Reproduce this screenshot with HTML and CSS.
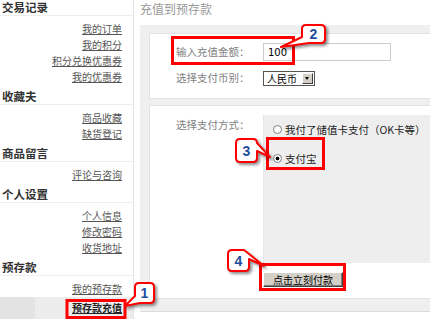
FILE: index.html
```html
<!DOCTYPE html>
<html lang="zh-CN">
<head>
    <meta charset="UTF-8">
    <title>充值到预存款</title>
    <link rel="stylesheet" href="styles.css">
</head>
<body>

<div class="page">
    <!-- Left Menu -->
    <div class="sidebar">
        <div class="group">
            <h3>交易记录</h3>
            <ul>
                <li><a href="#">我的订单</a></li>
                <li><a href="#">我的积分</a></li>
                <li><a href="#">积分兑换优惠券</a></li>
                <li><a href="#">我的优惠券</a></li>
            </ul>
        </div>
        <div class="group">
            <h3>收藏夫</h3>
            <ul>
                <li><a href="#">商品收藏</a></li>
                <li><a href="#">缺货登记</a></li>
            </ul>
        </div>
        <div class="group">
            <h3>商品留言</h3>
            <ul>
                <li><a href="#">评论与咨询</a></li>
            </ul>
        </div>
        <div class="group">
            <h3>个人设置</h3>
            <ul>
                <li><a href="#">个人信息</a></li>
                <li><a href="#">修改密码</a></li>
                <li><a href="#">收货地址</a></li>
            </ul>
        </div>
        <div class="group">
            <h3>预存款</h3>
            <ul>
                <li><a href="#">我的预存款</a></li>
                <li class="active"><a href="#">预存款充值</a></li>
            </ul>
        </div>
    </div>

    <!-- Recharge Form -->
    <div class="main">
        <div class="title">充值到预存款</div>
        <div class="frame">
            <div class="panel panel-amount">
                <div class="row">
                    <label class="field-label">输入充值金额：</label>
                    <input class="amount" type="text" value="100">
                </div>
                <div class="row">
                    <label class="field-label">选择支付币别：</label>
                    <div class="select">
                        <span class="select-text">人民币</span>
                        <span class="select-btn"></span>
                    </div>
                </div>
            </div>
            <div class="panel panel-pay">
                <div class="pay-row">
                    <label class="field-label pay-label">选择支付方式：</label>
                    <div class="methods">
                        <label class="method"><input type="radio" name="pay">我付了储值卡支付（OK卡等）</label>
                        <label class="method"><input type="radio" name="pay" checked>支付宝</label>
                    </div>
                </div>
                <button class="pay-btn">点击立刻付款</button>
            </div>
        </div>
    </div>

    <!-- Step annotations -->
    <svg class="notes" width="430" height="319" viewBox="0 0 430 319">
        <g class="marks">
            <rect x="67" y="300.5" width="58" height="17"/>
            <rect x="172.5" y="37.5" width="121" height="26"/>
            <rect x="267.5" y="138.5" width="56" height="30"/>
            <rect x="260.5" y="264.5" width="84" height="25"/>
        </g>
        <g class="bubbles">
            <path d="M139,283 H150 Q154,283 154,287 V299 Q154,303 150,303 H140 L125,306 L135,296 V287 Q135,283 139,283 Z"/>
            <path d="M306,25 H321 Q325,25 325,29 V39 Q325,43 321,43 H309 L281,47 L302,37 V29 Q302,25 306,25 Z"/>
            <path d="M240,139 H253 Q257,139 257,143 L270,157 L257,151 V158 Q257,162 253,162 H240 Q236,162 236,158 V143 Q236,139 240,139 Z"/>
            <path d="M232,250 H244 L264,266 L249,259 V267 Q249,271 245,271 H232 Q228,271 228,267 V254 Q228,250 232,250 Z"/>
        </g>
        <g class="nums">
            <text x="144.5" y="298">1</text>
            <text x="313.5" y="39">2</text>
            <text x="246.5" y="156">3</text>
            <text x="238.5" y="266">4</text>
        </g>
    </svg>
</div>

</body>
</html>
```

FILE: styles.css
```css
/* Reset */
* {
    margin: 0;
    padding: 0;
    box-sizing: border-box;
}

body {
    font-family: "Noto Sans CJK SC", "Liberation Sans", sans-serif;
    background: #fff;
    color: #333;
}

.page {
    position: relative;
    display: flex;
    width: 430px;
    height: 319px;
    overflow: hidden;
}

/* Sidebar */
.sidebar {
    width: 134px;
    flex-shrink: 0;
    border-right: 1px solid #e2e2e2;
}

.group h3 {
    font-size: 11.5px;
    line-height: 15px;
    font-weight: bold;
    color: #333;
    padding-left: 2px;
    border-bottom: 1px solid #eee;
}

.group ul {
    list-style: none;
    text-align: right;
    padding: 5px 11px 4px 0;
}

.group li {
    font-size: 10px;
    line-height: 16px;
}

.group a {
    color: #555;
    text-decoration: underline;
}

.group li.active {
    margin-right: -11px;
    padding: 3px 11px 8px 0;
    background: linear-gradient(to right, #e3e3e3 35px, #ececec 35px);
}

.group li.active a {
    color: #222;
    font-weight: bold;
}

/* Main area */
.main {
    flex: 1;
    margin-left: 6px;
    overflow: hidden;
}

.title {
    height: 25px;
    font-size: 12px;
    line-height: 17px;
    color: #999;
}

.frame {
    width: 330px;
    background: #efefef;
    padding: 8px 0 12px 9px;
    border-bottom: 1px solid #dcdcdc;
}

.panel {
    background: #fff;
    border: 1px solid #e2e2e2;
    padding-left: 26px;
}

.panel-amount {
    padding-top: 9px;
    padding-bottom: 11px;
    margin-bottom: 6px;
}

.row {
    display: flex;
    align-items: center;
    height: 18px;
}

.row + .row {
    margin-top: 8px;
}

.field-label {
    width: 87px;
    font-size: 10.5px;
    line-height: 14px;
    color: #808080;
    white-space: nowrap;
}

.amount {
    width: 128px;
    height: 18px;
    border: 1px solid #ccc;
    padding-left: 4px;
    font-family: "DejaVu Sans", sans-serif;
    font-size: 10px;
    color: #000;
    outline: none;
}

.select {
    display: flex;
    align-items: center;
    width: 52px;
    height: 15px;
    border: 1px solid #555;
    background: #fff;
}

.select-text {
    flex: 1;
    font-size: 10px;
    line-height: 13px;
    color: #000;
    padding-left: 3px;
}

.select-btn {
    position: relative;
    width: 11px;
    height: 11px;
    margin-right: 1px;
    background: #d4d0c8;
    border: 1px solid;
    border-color: #fff #404040 #404040 #fff;
}

.select-btn::after {
    content: "";
    position: absolute;
    left: 2px;
    top: 3px;
    border-left: 2.5px solid transparent;
    border-right: 2.5px solid transparent;
    border-top: 3px solid #000;
}

/* Payment methods */
.panel-pay {
    padding-top: 9px;
    padding-bottom: 11px;
}

.pay-row {
    display: flex;
    align-items: flex-start;
}

.pay-label {
    padding-top: 3px;
}

.methods {
    width: 200px;
    height: 148px;
    background: #eee;
    border-left: 1px solid #e6e6e6;
    padding: 7px 0 0 9px;
}

.method {
    display: flex;
    align-items: center;
    height: 14px;
    font-size: 10.5px;
    color: #222;
    white-space: nowrap;
}

.method + .method {
    margin-top: 15px;
}

.method input {
    appearance: none;
    flex-shrink: 0;
    width: 9px;
    height: 9px;
    margin-right: 3px;
    border: 1px solid #808080;
    border-radius: 50%;
    background: #fff;
}

.method input:checked {
    background: radial-gradient(circle, #000 0 1.6px, #fff 2.2px);
}

.pay-btn {
    display: block;
    width: 80px;
    height: 15px;
    margin: 9px 0 0 87px;
    background: #d4d0c8;
    border: 1px solid;
    border-color: #fff #404040 #404040 #fff;
    box-shadow: inset -1px -1px #808080;
    font-family: inherit;
    font-size: 10px;
    line-height: 12px;
    color: #000;
}

/* Annotations */
.notes {
    position: absolute;
    left: 0;
    top: 0;
    pointer-events: none;
}

.marks rect {
    fill: none;
    stroke: #f00;
    stroke-width: 3;
}

.bubbles {
    filter: drop-shadow(2px 2px 1.5px rgba(0, 0, 0, 0.45));
}

.bubbles path {
    fill: #fff;
    stroke: #f00;
    stroke-width: 2;
    stroke-linejoin: round;
}

.nums text {
    font-family: "Liberation Sans", Arial, sans-serif;
    font-size: 14px;
    font-weight: bold;
    fill: #1f4e9c;
    text-anchor: middle;
}
```
